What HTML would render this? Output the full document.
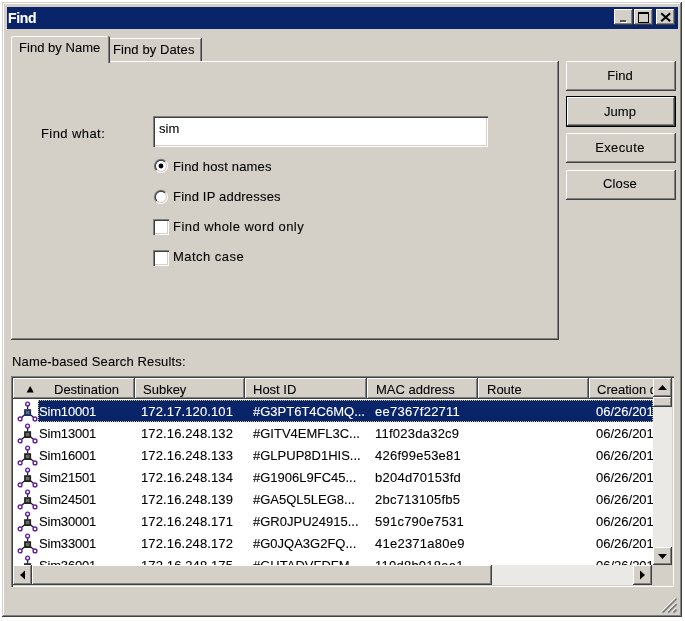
<!DOCTYPE html><html><head><meta charset="utf-8"><style>
html,body{margin:0;padding:0;background:#fff;width:685px;height:621px;overflow:hidden;position:relative}
.t{will-change:transform}
.a{position:absolute;box-sizing:border-box}
.t{position:absolute;white-space:nowrap;font-family:"Liberation Sans",sans-serif;-webkit-text-stroke:0.1px currentColor;}
</style></head><body>
<div class="a" style="left:2px;top:2px;width:680px;height:615px;background:#d4d0c8;box-shadow: inset -1px -1px #404040, inset 1px 1px #d4d0c8, inset -2px -2px #808080, inset 2px 2px #ffffff;"></div>
<div class="a" style="left:7px;top:7px;width:671px;height:22px;background:#0a246a;"></div>
<div class="t" style="left:8px;top:10.75px;font-size:14px;line-height:14px;color:#fff;letter-spacing:-0.3px;font-weight:bold;">Find</div>
<div class="a" style="left:614px;top:9px;width:19px;height:16px;background:#d4d0c8;box-shadow: inset -1px -1px #404040, inset 1px 1px #ffffff, inset -2px -2px #808080, inset 2px 2px #d4d0c8;"></div>
<div class="a" style="left:634px;top:9px;width:19px;height:16px;background:#d4d0c8;box-shadow: inset -1px -1px #404040, inset 1px 1px #ffffff, inset -2px -2px #808080, inset 2px 2px #d4d0c8;"></div>
<div class="a" style="left:656px;top:9px;width:19px;height:16px;background:#d4d0c8;box-shadow: inset -1px -1px #404040, inset 1px 1px #ffffff, inset -2px -2px #808080, inset 2px 2px #d4d0c8;"></div>
<div class="a" style="left:619.5px;top:20.3px;width:6.6px;height:2px;background:#555;box-shadow:1px 1px #ffffff;"></div>
<div class="a" style="left:638px;top:12px;width:10.5px;height:10.5px;border:1.3px solid #000;border-top-width:2.5px;"></div>
<svg class="a" style="left:656px;top:9px" width="19" height="16"><path d="M5.2 4.3 L14.2 12.2 M14.2 4.3 L5.2 12.2" stroke="#000" stroke-width="2"/></svg>
<div class="a" style="left:11px;top:61px;width:548px;height:279px;box-shadow: inset -1px -1px #404040, inset 1px 1px #ffffff, inset -2px -2px #808080;"></div>
<div class="a" style="left:109px;top:38px;width:93px;height:23px;background:#d4d0c8;box-shadow: inset -1px 0 #404040, inset 0 1px #ffffff, inset -2px 0 #808080;"></div>
<div class="t" style="left:113px;top:43.30px;font-size:13px;line-height:13px;color:#000;letter-spacing:0.1px;">Find by Dates</div>
<div class="a" style="left:10.5px;top:35.5px;width:99.5px;height:27.5px;background:#d4d0c8;box-shadow: inset -1px 0 #404040, inset 1px 1px #ffffff, inset -2px 0 #808080;border-radius:2px 2px 0 0"></div>
<div class="t" style="left:18.6px;top:40.60px;font-size:13px;line-height:13px;color:#000;letter-spacing:0.03px;">Find by Name</div>
<div class="a" style="left:566px;top:61px;width:110px;height:30px;background:#d4d0c8;box-shadow: inset -1px -1px #404040, inset 1px 1px #ffffff, inset -2px -2px #808080, inset 2px 2px #d4d0c8;"></div>
<div class="t" style="left:564.6px;width:110px;text-align:center;top:69.2px;font-size:13px;line-height:13px;letter-spacing:0px">Find</div>
<div class="a" style="left:566px;top:96px;width:110px;height:31px;background:#000;"></div>
<div class="a" style="left:567px;top:97px;width:108px;height:29px;background:#d4d0c8;box-shadow: inset -1px -1px #404040, inset 1px 1px #ffffff, inset -2px -2px #808080, inset 2px 2px #d4d0c8;"></div>
<div class="t" style="left:564.6px;width:110px;text-align:center;top:105.1px;font-size:13px;line-height:13px;letter-spacing:0px">Jump</div>
<div class="a" style="left:566px;top:133px;width:110px;height:30px;background:#d4d0c8;box-shadow: inset -1px -1px #404040, inset 1px 1px #ffffff, inset -2px -2px #808080, inset 2px 2px #d4d0c8;"></div>
<div class="t" style="left:564.7900000000001px;width:110px;text-align:center;top:141.2px;font-size:13px;line-height:13px;letter-spacing:0.38px">Execute</div>
<div class="a" style="left:566px;top:170px;width:110px;height:30px;background:#d4d0c8;box-shadow: inset -1px -1px #404040, inset 1px 1px #ffffff, inset -2px -2px #808080, inset 2px 2px #d4d0c8;"></div>
<div class="t" style="left:564.6750000000001px;width:110px;text-align:center;top:177.4px;font-size:13px;line-height:13px;letter-spacing:0.15px">Close</div>
<div class="t" style="left:41px;top:127.00px;font-size:13px;line-height:13px;color:#000;letter-spacing:0.42px;">Find what:</div>
<div class="a" style="left:153px;top:116px;width:335px;height:31px;background:#fff;box-shadow: inset 1px 1px #808080, inset 2px 2px #404040, inset -1px -1px #ffffff, inset -2px -2px #d4d0c8;"></div>
<div class="t" style="left:159px;top:121.70px;font-size:13px;line-height:13px;color:#000;letter-spacing:0px;">sim</div>
<svg class="a" style="left:153px;top:158px" width="16" height="16"><path d="M3.40 12.60 A6.5 6.5 0 0 1 12.60 3.40" stroke="#808080" stroke-width="1.35" fill="none"/><path d="M12.60 3.40 A6.5 6.5 0 0 1 3.40 12.60" stroke="#ffffff" stroke-width="1.1" fill="none"/><path d="M4.11 11.89 A5.5 5.5 0 0 1 11.89 4.11" stroke="#404040" stroke-width="1.35" fill="none"/><path d="M11.89 4.11 A5.5 5.5 0 0 1 4.11 11.89" stroke="#d4d0c8" stroke-width="1.1" fill="none"/><circle cx="8" cy="8" r="4.9" fill="#fff"/><circle cx="8" cy="8" r="2.4" fill="#000"/></svg>
<svg class="a" style="left:153px;top:189px" width="16" height="16"><path d="M3.40 12.60 A6.5 6.5 0 0 1 12.60 3.40" stroke="#808080" stroke-width="1.35" fill="none"/><path d="M12.60 3.40 A6.5 6.5 0 0 1 3.40 12.60" stroke="#ffffff" stroke-width="1.1" fill="none"/><path d="M4.11 11.89 A5.5 5.5 0 0 1 11.89 4.11" stroke="#404040" stroke-width="1.35" fill="none"/><path d="M11.89 4.11 A5.5 5.5 0 0 1 4.11 11.89" stroke="#d4d0c8" stroke-width="1.1" fill="none"/><circle cx="8" cy="8" r="4.9" fill="#fff"/></svg>
<div class="a" style="left:152.5px;top:219px;width:16px;height:16px;background:#fff;box-shadow: inset 1px 1px #808080, inset 2px 2px #404040, inset -1px -1px #ffffff, inset -2px -2px #d4d0c8;"></div>
<div class="a" style="left:152.5px;top:250px;width:16px;height:16px;background:#fff;box-shadow: inset 1px 1px #808080, inset 2px 2px #404040, inset -1px -1px #ffffff, inset -2px -2px #d4d0c8;"></div>
<div class="t" style="left:172.7px;top:159.60px;font-size:13px;line-height:13px;color:#000;letter-spacing:0.17px;">Find host names</div>
<div class="t" style="left:172.7px;top:190.20px;font-size:13px;line-height:13px;color:#000;letter-spacing:0.19px;">Find IP addresses</div>
<div class="t" style="left:172.7px;top:219.50px;font-size:13px;line-height:13px;color:#000;letter-spacing:0.45px;">Find whole word only</div>
<div class="t" style="left:172.7px;top:250.00px;font-size:13px;line-height:13px;color:#000;letter-spacing:0.47px;">Match case</div>
<div class="t" style="left:11.6px;top:355.00px;font-size:13px;line-height:13px;color:#000;letter-spacing:0.15px;">Name-based Search Results:</div>
<div class="a" style="left:11px;top:376px;width:663px;height:211px;background:#fff;box-shadow: inset 1px 1px #808080, inset 2px 2px #404040, inset -1px -1px #ffffff, inset -2px -2px #d4d0c8;"></div>
<div class="a" style="left:13px;top:378px;width:640px;height:21px;overflow:hidden;">
<div class="a" style="left:0px;top:0;width:122px;height:21px;background:#d4d0c8;box-shadow: inset -1px -1px #404040, inset 1px 1px #ffffff, inset -2px -2px #808080;"></div>
<div class="a" style="left:122px;top:0;width:110px;height:21px;background:#d4d0c8;box-shadow: inset -1px -1px #404040, inset 1px 1px #ffffff, inset -2px -2px #808080;"></div>
<div class="a" style="left:232px;top:0;width:122px;height:21px;background:#d4d0c8;box-shadow: inset -1px -1px #404040, inset 1px 1px #ffffff, inset -2px -2px #808080;"></div>
<div class="a" style="left:354px;top:0;width:111px;height:21px;background:#d4d0c8;box-shadow: inset -1px -1px #404040, inset 1px 1px #ffffff, inset -2px -2px #808080;"></div>
<div class="a" style="left:465px;top:0;width:111px;height:21px;background:#d4d0c8;box-shadow: inset -1px -1px #404040, inset 1px 1px #ffffff, inset -2px -2px #808080;"></div>
<div class="a" style="left:576px;top:0;width:80px;height:21px;background:#d4d0c8;box-shadow: inset -1px -1px #404040, inset 1px 1px #ffffff, inset -2px -2px #808080;"></div>
</div>
<div class="a" style="left:13px;top:378px;width:640px;height:21px;overflow:hidden;">
<div class="t" style="left:41px;top:5.00px;font-size:13px;line-height:13px;color:#000;letter-spacing:0px;">Destination</div>
<div class="t" style="left:129.8px;top:5.00px;font-size:13px;line-height:13px;color:#000;letter-spacing:0px;">Subkey</div>
<div class="t" style="left:240px;top:5.00px;font-size:13px;line-height:13px;color:#000;letter-spacing:0px;">Host ID</div>
<div class="t" style="left:363px;top:5.00px;font-size:13px;line-height:13px;color:#000;letter-spacing:0px;">MAC address</div>
<div class="t" style="left:473.7px;top:5.00px;font-size:13px;line-height:13px;color:#000;letter-spacing:0px;">Route</div>
<div class="t" style="left:583.5px;top:5.00px;font-size:13px;line-height:13px;color:#000;letter-spacing:0px;">Creation date</div>
</div>
<svg class="a" style="left:25px;top:385px" width="12" height="8"><path d="M1.6 7.5 L5.2 1 L8.8 7.5 Z" fill="#000"/></svg>
<div class="a" style="left:13px;top:399px;width:640px;height:166px;overflow:hidden;">
<div class="a" style="left:25px;top:0.5px;width:615px;height:22px;background:#0a246a;"></div>
<div class="a" style="left:25px;top:0.5px;width:615px;height:22px;border:1px dotted #c8c070;"></div>
<svg class="a" style="left:4px;top:0.5px" width="22" height="22"><path d="M10.6 5 L10.6 9.5 M8 14.5 L4.2 17.8 M13.2 14.5 L17 17.8" stroke="#222" stroke-width="1.3"/><rect x="7.1" y="9.2" width="7" height="6.8" fill="#1a2a6a"/><rect x="8.8" y="10.8" width="3.6" height="3.4" fill="#6a6a6a"/><circle cx="10.6" cy="4" r="1.9" fill="#fff" stroke="#6020a0" stroke-width="1.4"/><circle cx="3.1" cy="18.9" r="1.9" fill="#fff" stroke="#6020a0" stroke-width="1.4"/><circle cx="18" cy="18.9" r="1.9" fill="#fff" stroke="#6020a0" stroke-width="1.4"/></svg>
<div class="t" style="left:25.799999999999997px;top:5.70px;font-size:13px;line-height:13px;color:#fff;letter-spacing:-0.18px;">Sim10001</div>
<div class="t" style="left:128.4px;top:5.70px;font-size:13px;line-height:13px;color:#fff;letter-spacing:0.12px;">172.17.120.101</div>
<div class="t" style="left:239.6px;top:5.70px;font-size:13px;line-height:13px;color:#fff;letter-spacing:0px;">#G3PT6T4C6MQ...</div>
<div class="t" style="left:362px;top:5.70px;font-size:13px;line-height:13px;color:#fff;letter-spacing:0.24px;">ee7367f22711</div>
<div class="t" style="left:583px;top:5.70px;font-size:13px;line-height:13px;color:#fff;letter-spacing:0px;">06/26/201</div>
<svg class="a" style="left:4px;top:22.5px" width="22" height="22"><path d="M10.6 5 L10.6 9.5 M8 14.5 L4.2 17.8 M13.2 14.5 L17 17.8" stroke="#222" stroke-width="1.3"/><rect x="7.1" y="9.2" width="7" height="6.8" fill="#222"/><rect x="8.8" y="10.8" width="3.6" height="3.4" fill="#6a6a6a"/><circle cx="10.6" cy="4" r="1.9" fill="#fff" stroke="#6020a0" stroke-width="1.4"/><circle cx="3.1" cy="18.9" r="1.9" fill="#fff" stroke="#6020a0" stroke-width="1.4"/><circle cx="18" cy="18.9" r="1.9" fill="#fff" stroke="#6020a0" stroke-width="1.4"/></svg>
<div class="t" style="left:25.799999999999997px;top:27.70px;font-size:13px;line-height:13px;color:#000;letter-spacing:-0.18px;">Sim13001</div>
<div class="t" style="left:128.4px;top:27.70px;font-size:13px;line-height:13px;color:#000;letter-spacing:0.12px;">172.16.248.132</div>
<div class="t" style="left:239.6px;top:27.70px;font-size:13px;line-height:13px;color:#000;letter-spacing:0px;">#GITV4EMFL3C...</div>
<div class="t" style="left:362px;top:27.70px;font-size:13px;line-height:13px;color:#000;letter-spacing:0.24px;">11f023da32c9</div>
<div class="t" style="left:583px;top:27.70px;font-size:13px;line-height:13px;color:#000;letter-spacing:0px;">06/26/201</div>
<svg class="a" style="left:4px;top:44.5px" width="22" height="22"><path d="M10.6 5 L10.6 9.5 M8 14.5 L4.2 17.8 M13.2 14.5 L17 17.8" stroke="#222" stroke-width="1.3"/><rect x="7.1" y="9.2" width="7" height="6.8" fill="#222"/><rect x="8.8" y="10.8" width="3.6" height="3.4" fill="#6a6a6a"/><circle cx="10.6" cy="4" r="1.9" fill="#fff" stroke="#6020a0" stroke-width="1.4"/><circle cx="3.1" cy="18.9" r="1.9" fill="#fff" stroke="#6020a0" stroke-width="1.4"/><circle cx="18" cy="18.9" r="1.9" fill="#fff" stroke="#6020a0" stroke-width="1.4"/></svg>
<div class="t" style="left:25.799999999999997px;top:49.70px;font-size:13px;line-height:13px;color:#000;letter-spacing:-0.18px;">Sim16001</div>
<div class="t" style="left:128.4px;top:49.70px;font-size:13px;line-height:13px;color:#000;letter-spacing:0.12px;">172.16.248.133</div>
<div class="t" style="left:239.6px;top:49.70px;font-size:13px;line-height:13px;color:#000;letter-spacing:0px;">#GLPUP8D1HIS...</div>
<div class="t" style="left:362px;top:49.70px;font-size:13px;line-height:13px;color:#000;letter-spacing:0.24px;">426f99e53e81</div>
<div class="t" style="left:583px;top:49.70px;font-size:13px;line-height:13px;color:#000;letter-spacing:0px;">06/26/201</div>
<svg class="a" style="left:4px;top:66.5px" width="22" height="22"><path d="M10.6 5 L10.6 9.5 M8 14.5 L4.2 17.8 M13.2 14.5 L17 17.8" stroke="#222" stroke-width="1.3"/><rect x="7.1" y="9.2" width="7" height="6.8" fill="#222"/><rect x="8.8" y="10.8" width="3.6" height="3.4" fill="#6a6a6a"/><circle cx="10.6" cy="4" r="1.9" fill="#fff" stroke="#6020a0" stroke-width="1.4"/><circle cx="3.1" cy="18.9" r="1.9" fill="#fff" stroke="#6020a0" stroke-width="1.4"/><circle cx="18" cy="18.9" r="1.9" fill="#fff" stroke="#6020a0" stroke-width="1.4"/></svg>
<div class="t" style="left:25.799999999999997px;top:71.70px;font-size:13px;line-height:13px;color:#000;letter-spacing:-0.18px;">Sim21501</div>
<div class="t" style="left:128.4px;top:71.70px;font-size:13px;line-height:13px;color:#000;letter-spacing:0.12px;">172.16.248.134</div>
<div class="t" style="left:239.6px;top:71.70px;font-size:13px;line-height:13px;color:#000;letter-spacing:0px;">#G1906L9FC45...</div>
<div class="t" style="left:362px;top:71.70px;font-size:13px;line-height:13px;color:#000;letter-spacing:0.24px;">b204d70153fd</div>
<div class="t" style="left:583px;top:71.70px;font-size:13px;line-height:13px;color:#000;letter-spacing:0px;">06/26/201</div>
<svg class="a" style="left:4px;top:88.5px" width="22" height="22"><path d="M10.6 5 L10.6 9.5 M8 14.5 L4.2 17.8 M13.2 14.5 L17 17.8" stroke="#222" stroke-width="1.3"/><rect x="7.1" y="9.2" width="7" height="6.8" fill="#222"/><rect x="8.8" y="10.8" width="3.6" height="3.4" fill="#6a6a6a"/><circle cx="10.6" cy="4" r="1.9" fill="#fff" stroke="#6020a0" stroke-width="1.4"/><circle cx="3.1" cy="18.9" r="1.9" fill="#fff" stroke="#6020a0" stroke-width="1.4"/><circle cx="18" cy="18.9" r="1.9" fill="#fff" stroke="#6020a0" stroke-width="1.4"/></svg>
<div class="t" style="left:25.799999999999997px;top:93.70px;font-size:13px;line-height:13px;color:#000;letter-spacing:-0.18px;">Sim24501</div>
<div class="t" style="left:128.4px;top:93.70px;font-size:13px;line-height:13px;color:#000;letter-spacing:0.12px;">172.16.248.139</div>
<div class="t" style="left:239.6px;top:93.70px;font-size:13px;line-height:13px;color:#000;letter-spacing:0px;">#GA5QL5LEG8...</div>
<div class="t" style="left:362px;top:93.70px;font-size:13px;line-height:13px;color:#000;letter-spacing:0.24px;">2bc713105fb5</div>
<div class="t" style="left:583px;top:93.70px;font-size:13px;line-height:13px;color:#000;letter-spacing:0px;">06/26/201</div>
<svg class="a" style="left:4px;top:110.5px" width="22" height="22"><path d="M10.6 5 L10.6 9.5 M8 14.5 L4.2 17.8 M13.2 14.5 L17 17.8" stroke="#222" stroke-width="1.3"/><rect x="7.1" y="9.2" width="7" height="6.8" fill="#222"/><rect x="8.8" y="10.8" width="3.6" height="3.4" fill="#6a6a6a"/><circle cx="10.6" cy="4" r="1.9" fill="#fff" stroke="#6020a0" stroke-width="1.4"/><circle cx="3.1" cy="18.9" r="1.9" fill="#fff" stroke="#6020a0" stroke-width="1.4"/><circle cx="18" cy="18.9" r="1.9" fill="#fff" stroke="#6020a0" stroke-width="1.4"/></svg>
<div class="t" style="left:25.799999999999997px;top:115.70px;font-size:13px;line-height:13px;color:#000;letter-spacing:-0.18px;">Sim30001</div>
<div class="t" style="left:128.4px;top:115.70px;font-size:13px;line-height:13px;color:#000;letter-spacing:0.12px;">172.16.248.171</div>
<div class="t" style="left:239.6px;top:115.70px;font-size:13px;line-height:13px;color:#000;letter-spacing:0px;">#GR0JPU24915...</div>
<div class="t" style="left:362px;top:115.70px;font-size:13px;line-height:13px;color:#000;letter-spacing:0.24px;">591c790e7531</div>
<div class="t" style="left:583px;top:115.70px;font-size:13px;line-height:13px;color:#000;letter-spacing:0px;">06/26/201</div>
<svg class="a" style="left:4px;top:132.5px" width="22" height="22"><path d="M10.6 5 L10.6 9.5 M8 14.5 L4.2 17.8 M13.2 14.5 L17 17.8" stroke="#222" stroke-width="1.3"/><rect x="7.1" y="9.2" width="7" height="6.8" fill="#222"/><rect x="8.8" y="10.8" width="3.6" height="3.4" fill="#6a6a6a"/><circle cx="10.6" cy="4" r="1.9" fill="#fff" stroke="#6020a0" stroke-width="1.4"/><circle cx="3.1" cy="18.9" r="1.9" fill="#fff" stroke="#6020a0" stroke-width="1.4"/><circle cx="18" cy="18.9" r="1.9" fill="#fff" stroke="#6020a0" stroke-width="1.4"/></svg>
<div class="t" style="left:25.799999999999997px;top:137.70px;font-size:13px;line-height:13px;color:#000;letter-spacing:-0.18px;">Sim33001</div>
<div class="t" style="left:128.4px;top:137.70px;font-size:13px;line-height:13px;color:#000;letter-spacing:0.12px;">172.16.248.172</div>
<div class="t" style="left:239.6px;top:137.70px;font-size:13px;line-height:13px;color:#000;letter-spacing:0px;">#G0JQA3G2FQ...</div>
<div class="t" style="left:362px;top:137.70px;font-size:13px;line-height:13px;color:#000;letter-spacing:0.24px;">41e2371a80e9</div>
<div class="t" style="left:583px;top:137.70px;font-size:13px;line-height:13px;color:#000;letter-spacing:0px;">06/26/201</div>
<svg class="a" style="left:4px;top:154.5px" width="22" height="22"><path d="M10.6 5 L10.6 9.5 M8 14.5 L4.2 17.8 M13.2 14.5 L17 17.8" stroke="#222" stroke-width="1.3"/><rect x="7.1" y="9.2" width="7" height="6.8" fill="#222"/><rect x="8.8" y="10.8" width="3.6" height="3.4" fill="#6a6a6a"/><circle cx="10.6" cy="4" r="1.9" fill="#fff" stroke="#6020a0" stroke-width="1.4"/><circle cx="3.1" cy="18.9" r="1.9" fill="#fff" stroke="#6020a0" stroke-width="1.4"/><circle cx="18" cy="18.9" r="1.9" fill="#fff" stroke="#6020a0" stroke-width="1.4"/></svg>
<div class="t" style="left:25.799999999999997px;top:159.70px;font-size:13px;line-height:13px;color:#000;letter-spacing:-0.18px;">Sim36001</div>
<div class="t" style="left:128.4px;top:159.70px;font-size:13px;line-height:13px;color:#000;letter-spacing:0.12px;">172.16.248.175</div>
<div class="t" style="left:239.6px;top:159.70px;font-size:13px;line-height:13px;color:#000;letter-spacing:0px;">#GHTADVFDFM...</div>
<div class="t" style="left:362px;top:159.70px;font-size:13px;line-height:13px;color:#000;letter-spacing:0.24px;">110d8b018ee1</div>
<div class="t" style="left:583px;top:159.70px;font-size:13px;line-height:13px;color:#000;letter-spacing:0px;">06/26/201</div>
</div>
<div class="a" style="left:653px;top:378px;width:19px;height:187px;background:#ebe9e5;"></div>
<div class="a" style="left:653px;top:378px;width:19px;height:18.5px;background:#d4d0c8;box-shadow: inset -1px -1px #404040, inset 1px 1px #ffffff, inset -2px -2px #808080, inset 2px 2px #d4d0c8;"></div>
<svg class="a" style="left:653px;top:378.5px" width="19" height="18"><path d="M5 11 L9.5 6 L14 11 Z" fill="#000"/></svg>
<div class="a" style="left:653px;top:396.5px;width:19px;height:10px;background:#d4d0c8;box-shadow: inset -1px -1px #404040, inset 1px 1px #ffffff, inset -2px -2px #808080, inset 2px 2px #d4d0c8;"></div>
<div class="a" style="left:653px;top:547px;width:19px;height:18px;background:#d4d0c8;box-shadow: inset -1px -1px #404040, inset 1px 1px #ffffff, inset -2px -2px #808080, inset 2px 2px #d4d0c8;"></div>
<svg class="a" style="left:653px;top:547px" width="19" height="18"><path d="M5 7 L9.5 12 L14 7 Z" fill="#000"/></svg>
<div class="a" style="left:13px;top:565px;width:640px;height:20px;background:#ebe9e5;"></div>
<div class="a" style="left:13px;top:565px;width:19px;height:20px;background:#d4d0c8;box-shadow: inset -1px -1px #404040, inset 1px 1px #ffffff, inset -2px -2px #808080, inset 2px 2px #d4d0c8;"></div>
<svg class="a" style="left:13px;top:565px" width="19" height="20"><path d="M12 5.5 L7 10 L12 14.5 Z" fill="#000"/></svg>
<div class="a" style="left:32px;top:565px;width:460px;height:20px;background:#d4d0c8;box-shadow: inset -1px -1px #404040, inset 1px 1px #ffffff, inset -2px -2px #808080, inset 2px 2px #d4d0c8;"></div>
<div class="a" style="left:633px;top:565px;width:19px;height:20px;background:#d4d0c8;box-shadow: inset -1px -1px #404040, inset 1px 1px #ffffff, inset -2px -2px #808080, inset 2px 2px #d4d0c8;"></div>
<svg class="a" style="left:633px;top:565px" width="19" height="20"><path d="M7 5.5 L12 10 L7 14.5 Z" fill="#000"/></svg>
<div class="a" style="left:652px;top:565px;width:20px;height:20px;background:#d4d0c8;"></div>
<svg class="a" style="left:660px;top:596px" width="20" height="20"><path d="M2.6 16.6 L16.6 2.6 M8 16.6 L16.6 8 M13.4 16.6 L16.6 13.4" stroke="#808080" stroke-width="2"/><path d="M1.6 15.6 L15.6 1.6 M7 15.6 L15.6 7 M12.4 15.6 L15.6 12.4" stroke="#ffffff" stroke-width="1"/></svg>
</body></html>
